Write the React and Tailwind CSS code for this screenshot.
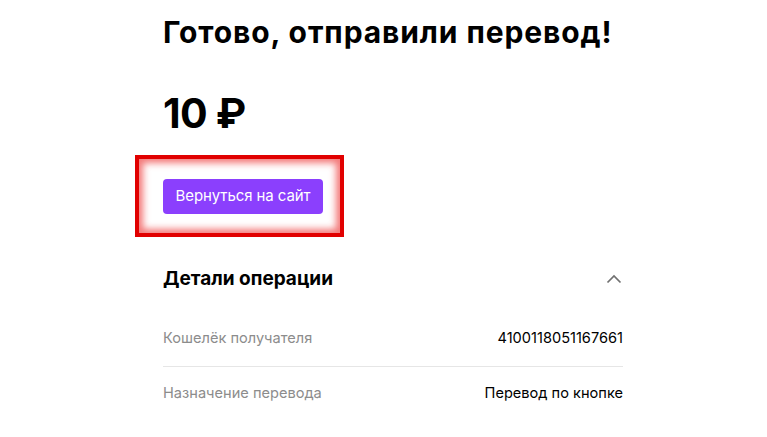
import React from "react";

const rows = [
  { label: "Кошелёк получателя", value: "4100118051167661" },
  { label: "Назначение перевода", value: "Перевод по кнопке" },
];

export default function App() {
  return (
    <div className="min-h-[437px] bg-white text-black" style={{ fontFamily: "Inter, 'Noto Sans', sans-serif" }}>
      <div className="pl-[163px] w-[623px] pt-[13px]">
        <h1 className="text-[30px] leading-[38px] font-bold tracking-[0.9px]">Готово, отправили перевод!</h1>

        <div className="mt-[38px] text-[41px] leading-[48px] font-bold tracking-[-0.8px]">10 ₽</div>

        {/* highlighted button */}
        <div className="mt-[18px] -ml-[28px] w-[209px] h-[82px] border-[4px] border-[#e10000] shadow-[inset_0_0_7px_4px_rgba(235,30,30,0.6)] pl-[24px] pt-[20px]">
          <button className="h-[35px] w-[160px] rounded-[4px] bg-[#8b3ffd] text-white text-[15px] font-normal tracking-[-0.1px]">
            Вернуться на сайт
          </button>
        </div>

        <div className="mt-[22px] flex items-center justify-between h-[40px]">
          <span className="text-[19px] font-bold">Детали операции</span>
          <svg className="w-[16px] h-[10px] mr-[1px]" viewBox="0 0 16 10" fill="none" stroke="#707070" strokeWidth="1.7">
            <path d="M1.5 8.5 8 2l6.5 6.5" />
          </svg>
        </div>

        <div className="mt-[13px]">
          {rows.map((r, i) => (
            <div
              key={i}
              className={`flex items-center justify-between h-[54px] text-[14.6px] ${i > 0 ? "border-t border-[#e6e6e6]" : ""}`}
            >
              <span className="text-[#8c8c8c]">{r.label}</span>
              <span className="text-black">{r.value}</span>
            </div>
          ))}
        </div>
      </div>
    </div>
  );
}
